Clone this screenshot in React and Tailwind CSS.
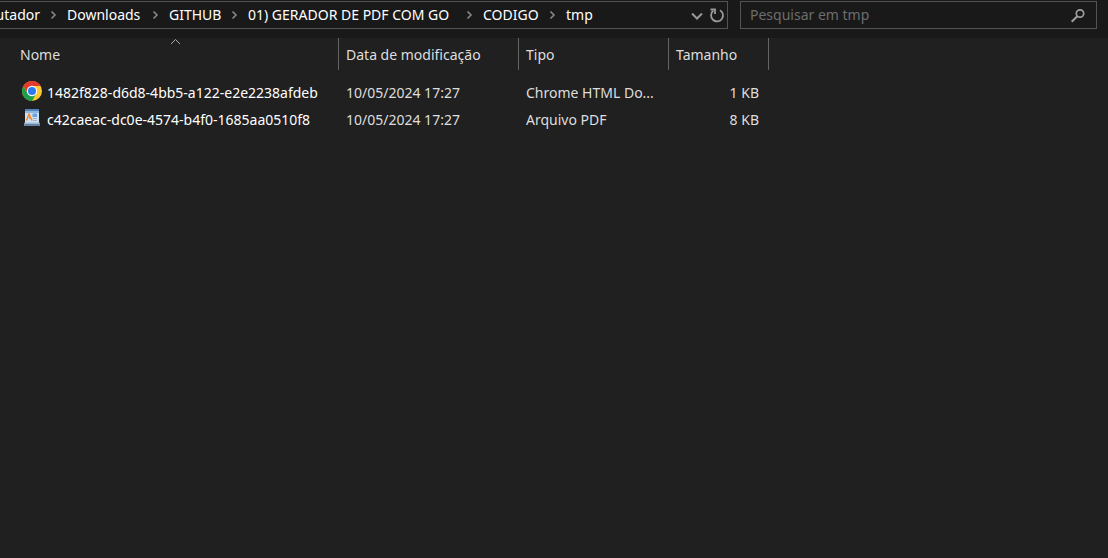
const crumbs = [
  { label: "Downloads", width: "w-[75px]" },
  { label: "GITHUB", width: "w-[52px]" },
  { label: "01) GERADOR DE PDF COM GO", width: "w-[208px]" },
  { label: "CODIGO", width: "w-[56px]" },
  { label: "tmp", width: "w-7" },
];

const files = [
  { icon: ChromeIcon, name: "1482f828-d6d8-4bb5-a122-e2e2238afdeb", date: "10/05/2024 17:27", type: "Chrome HTML Do...", size: "1 KB" },
  { icon: DocumentIcon, name: "c42caeac-dc0e-4574-b4f0-1685aa0510f8", date: "10/05/2024 17:27", type: "Arquivo PDF", size: "8 KB" },
];

function ChromeIcon() {
  return (
    <svg className="mb-[3px] size-5 shrink-0" viewBox="0 0 20 20" aria-hidden="true">
      <circle cx="10" cy="10" r="10" fill="#fcc934" />
      <path d="M10 5H18.66A10 10 0 0 0 1.34 5L5.67 12.5Z" fill="#e33b2e" />
      <path d="M1.34 5A10 10 0 0 0 10 20L14.33 12.5L10 15L5.67 12.5Z" fill="#1e9e49" />
      <circle cx="10" cy="10" r="5.2" fill="#fff" />
      <circle cx="10" cy="10" r="4" fill="#2a7af0" />
    </svg>
  );
}

function DocumentIcon() {
  return (
    <svg className="mb-[3px] size-5 shrink-0" viewBox="0 0 20 20" aria-hidden="true">
      <path d="M3 1H17V14L18 18H2L3 14Z" fill="#cfe0f0" />
      <path d="M3 1H17V3H3Z" fill="#4f82b8" />
      <path d="M3 3H17V5H3Z" fill="#93b8de" />
      <path d="M2.7 14.5H17.3L17.6 16H2.4Z" fill="#a3b9cf" />
      <path d="M2.4 16H17.6L18 18H2Z" fill="#6484a5" />
      <path d="M4.5 12.5L7 6.2L10 12.5M7 10H9.5" fill="none" stroke="#f08a3a" strokeWidth="1.6" />
      <path d="M10.5 5.5H15V9H10.5Z" fill="#6aa2e0" />
      <path d="M11 10.5H15M11 12.5H15" stroke="#9bb6d2" />
    </svg>
  );
}

function Separator() {
  return (
    <svg className="mx-[9px] h-3 w-[9px] shrink-0" viewBox="0 0 9 12" fill="none" stroke="#888" strokeWidth="1.6" aria-hidden="true">
      <path d="M2.5 2.5L6 6L2.5 9.5" />
    </svg>
  );
}

export default function App() {
  return (
    <div className="min-h-screen bg-[#202020] font-['Noto_Sans','Open_Sans',sans-serif] text-sm text-[#dedede]">
      <header className="grid h-[38px] grid-cols-[728fr_357fr] gap-3 bg-[#191919] pt-px pr-[11px] pb-[9px]">
        <div className="flex min-w-0 border border-l-0 border-[#535353] text-white">
          <nav aria-label="Caminho" className="flex min-w-0 flex-1 items-center overflow-hidden whitespace-nowrap">
            <a href="#computador" className="flex w-10 shrink-0 justify-end">utador</a>
            {crumbs.map((c) => (
              <div key={c.label} className="flex items-center">
                <Separator />
                <a href="#pasta" className={c.width}>{c.label}</a>
              </div>
            ))}
          </nav>
          <button aria-label="Locais anteriores" className="flex w-5 items-center justify-center">
            <svg className="size-3" viewBox="0 0 12 12" fill="none" stroke="#999" strokeWidth="2" aria-hidden="true">
              <path d="M1 4.5L6 9.5L11 4.5" />
            </svg>
          </button>
          <button aria-label="Atualizar" className="flex w-5 items-center justify-center">
            <svg className="size-4" viewBox="0 0 16 16" fill="none" stroke="#999" strokeWidth="1.8" aria-hidden="true">
              <path d="M11 3.2A6 6 0 1 1 4.2 3.8" />
              <path d="M1.5 2.5H6V7" />
            </svg>
          </button>
        </div>
        <label className="flex min-w-0 items-center border border-[#535353] pr-2.5 pl-[9px]">
          <input type="text" aria-label="Pesquisar em tmp" placeholder="Pesquisar em tmp" className="min-w-0 flex-1 bg-transparent outline-none placeholder:text-[#6d6d6d]" />
          <svg className="size-4 shrink-0" viewBox="0 0 16 16" fill="none" stroke="#a0a0a0" aria-hidden="true">
            <circle cx="10" cy="6.5" r="3.7" strokeWidth="1.7" />
            <path d="M7.3 9.2L1.7 14.8" strokeWidth="2" />
          </svg>
        </label>
      </header>
      <main>
        <table className="w-[769px] table-fixed border-separate border-spacing-0 text-left whitespace-nowrap">
          <colgroup>
            <col className="w-[339px]" />
            <col className="w-[180px]" />
            <col className="w-[150px]" />
            <col className="w-[100px]" />
          </colgroup>
          <thead>
            <tr className="h-8">
              <th aria-sort="ascending" className="relative border-r border-[#636363] p-0 pt-0.5 pl-5 font-normal">
                Nome
                <svg className="absolute top-0 left-[170px] h-[7px] w-[11px]" viewBox="0 0 11 7" fill="none" stroke="#aaa" aria-hidden="true">
                  <path d="M1 6L5.5 1.5L10 6" />
                </svg>
              </th>
              <th className="border-r border-[#636363] p-0 pt-0.5 pl-[7px] font-normal">Data de modificação</th>
              <th className="border-r border-[#636363] p-0 pt-0.5 pl-[7px] font-normal">Tipo</th>
              <th className="border-r border-[#636363] p-0 pt-0.5 pl-[7px] font-normal">Tamanho</th>
            </tr>
          </thead>
          <tbody>
            <tr aria-hidden="true" className="h-[9px]"><td colSpan="4" className="p-0" /></tr>
            {files.map(({ icon: Icon, name, date, type, size }) => (
              <tr key={name} className="h-[27px]">
                <td className="p-0 pl-[22px]">
                  <div className="flex items-center gap-[5px] text-white">
                    <Icon />
                    <span>{name}</span>
                  </div>
                </td>
                <td className="p-0 pl-[7px]">{date}</td>
                <td className="p-0 pl-[7px]">{type}</td>
                <td className="p-0 pr-2.5 text-right">{size}</td>
              </tr>
            ))}
          </tbody>
        </table>
      </main>
    </div>
  );
}
